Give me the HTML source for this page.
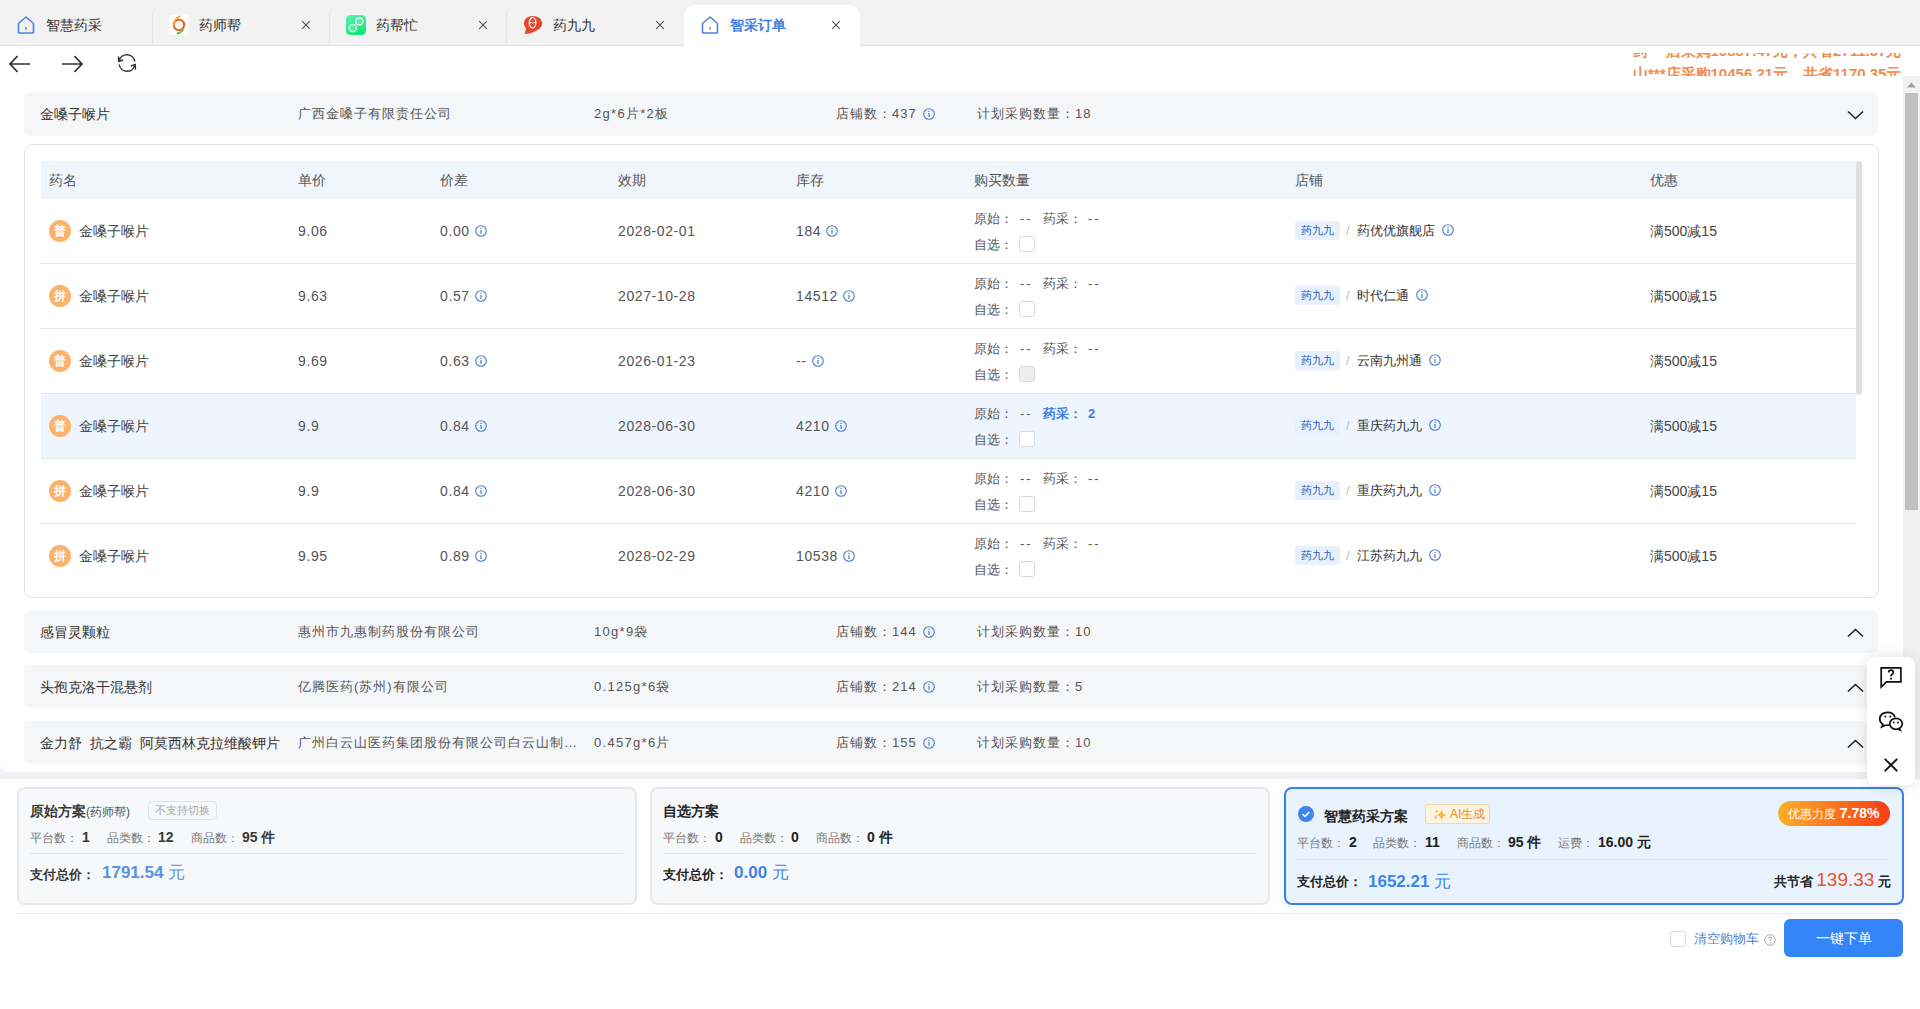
<!DOCTYPE html><html><head><meta charset="utf-8"><style>*{box-sizing:border-box;margin:0;padding:0}
html,body{width:1920px;height:1009px;overflow:hidden;background:#fff;font-family:"Liberation Sans",sans-serif;color:#333;font-size:14px}
.a{position:absolute;white-space:nowrap}
#tabbar{position:absolute;left:0;top:0;width:1920px;height:46px;background:#f2f2f2;border-bottom:1px solid #e3e3e3;z-index:2}
.tab,.tab0{position:absolute;top:5px;height:41px;width:177px}
.tab0{left:0;width:152px}
.tab{border-radius:10px 10px 0 0;border-left:1px solid #e4e4e4}
.tab.active{background:#fff;border:none;width:176px}
.ic{position:absolute;left:16px;top:10px;width:20px;height:20px}
.tab0 .ic{left:16px;top:10px}
.tt{position:absolute;left:46px;top:12px;font-size:14px;color:#333;line-height:16px;white-space:nowrap}
.cl{position:absolute;left:148px;top:15px;width:10px;height:10px;line-height:0}
.tab.active .cl{left:147px}
#nav{position:absolute;left:0;top:46px;width:1920px;height:30px;background:#fff}
#ticker{position:absolute;left:1633px;top:7px;width:270px;height:23px;overflow:hidden}
.tk{position:absolute;left:0;font-size:15px;font-weight:bold;color:#f08c4c;line-height:18px;white-space:nowrap}
#content{position:absolute;left:0;top:76px;width:1903px;height:696px;background:#fff;border-radius:8px;overflow:hidden;z-index:1}
.gh{position:absolute;left:24px;width:1854px;height:44px;background:#f5f6f8;border-radius:6px}
.gh .nm{position:absolute;left:16px;top:13px;font-size:14px;line-height:18px;color:#333;white-space:nowrap}
.gh .co,.gh .sp,.gh .sh,.gh .pl{position:absolute;top:14px;font-size:13px;line-height:16px;color:#555;white-space:nowrap;letter-spacing:1px}
.gh .co{left:274px}
.gh .sp{left:570px;letter-spacing:1.3px}
.gh .sh{left:812px}
.gh .pl{left:953px}
.gh .chev{position:absolute;left:1823px;top:18px;width:17px;height:10px;line-height:0}
.info{display:inline-block;width:12px;height:12px;vertical-align:-1px;margin-left:3px}
.gh .info{margin-left:2px;vertical-align:-2px}
#card{position:absolute;left:24px;top:68px;width:1855px;height:454px;border:1px solid #e4e4e4;border-radius:8px;background:#fff}
#thead{position:absolute;left:16px;top:16px;width:1815px;height:38px;background:#f1f6fd}
.th{position:absolute;top:11px;font-size:14px;line-height:16px;color:#555;white-space:nowrap}
.row{position:absolute;left:16px;width:1815px;height:65px;border-bottom:1px solid #e6e6e6}
.row.hl{background:#eef5fe}
.td{position:absolute;top:23px;font-size:14px;line-height:18px;color:#444;white-space:nowrap}
.num{letter-spacing:0.6px;color:#555}
.num .info{margin-left:5px}
.badge{position:absolute;left:8px;top:21px;width:22px;height:22px;border-radius:50%;background:#fbb36b;color:#fff;font-size:12px;line-height:22px;text-align:center;font-weight:bold}
.q{position:absolute;font-size:13px;line-height:16px;color:#555;white-space:nowrap}
.cb{position:absolute;left:978px;top:37px;width:16px;height:16px;border:1px solid #d9d9d9;border-radius:3px;background:#fff}
.tag{position:absolute;left:1254px;top:22px;width:45px;height:19px;background:#e6f1fd;color:#2e5fb5;font-size:11px;line-height:19px;text-align:center;border-radius:3px}
.slash{position:absolute;left:1305px;top:23px;color:#bbb;font-size:13px;line-height:18px}
.store{position:absolute;left:1316px;top:23px;font-size:13px;line-height:18px;color:#333;white-space:nowrap}
#tscroll{position:absolute;left:1831px;top:16px;width:6px;height:234px;background:#e0e0e0;border-radius:3px}
#sbtrack{position:absolute;left:1903px;top:76px;width:17px;height:704px;background:#f1f1f1;z-index:1}
#sbthumb{position:absolute;left:2px;top:17px;width:13px;height:417px;background:#c1c1c1}
#band{position:absolute;left:0;top:760px;width:1903px;height:19px;background:linear-gradient(#f8f9fb,#f1f2f5 60%,#eceef2)}
#bottom{position:absolute;left:0;top:779px;width:1920px;height:230px;background:#fff;z-index:1}
.plan{position:absolute;top:8px;width:620px;height:118px;border:2px solid #e6e8ec;border-radius:8px;background:#f7f8fa}
.plan.sel{width:620px;border-color:#3b80e6;background:#e8f3fe;box-shadow:0 2px 8px rgba(60,120,220,0.08)}
.pt{position:absolute;top:13px;font-size:14px;line-height:18px;font-weight:bold;color:#222;white-space:nowrap}
.nosw{position:absolute;left:129px;top:12px;height:19px;padding:0 6px;border:1px solid #e3e3e3;border-radius:4px;font-size:11px;line-height:17px;color:#aaa;background:#f7f8fa}
.sl{position:absolute;top:41px;font-size:12px;line-height:16px;color:#777;white-space:nowrap}
.sv{position:absolute;top:39px;font-size:14px;line-height:18px;color:#222;font-weight:bold;white-space:nowrap}
.sel .sl{top:46px}
.sel .sv{top:44px}
.pdiv{position:absolute;left:11px;right:12px;top:64px;height:1px;background:#e4e6ea}
.sel .pdiv{top:70px}
.pay{position:absolute;top:77px;font-size:13px;line-height:18px;font-weight:bold;color:#222;white-space:nowrap}
.amt{position:absolute;top:72px;font-size:17px;line-height:24px;font-weight:bold;color:#3d85e8;white-space:nowrap}
.p1 .amt{color:#5b93e0}
.p1 .pt,.p1 .pay,.p1 .sv{color:#3a3a3a}
.yuan{font-weight:normal;font-size:17px}
.aitag{position:absolute;left:139px;top:15px;width:65px;height:20px;border:1px solid #f3d9a9;background:#fdf3e1;border-radius:3px;color:#e2922c;font-size:12px;line-height:14px}
.disc{position:absolute;left:492px;top:12px;width:112px;height:25px;border-radius:13px;background:linear-gradient(90deg,#fbaf28,#f83d16);color:#fff;font-size:12px;line-height:25px;text-align:center;white-space:nowrap}
.save{position:absolute;right:11px;top:80px;font-size:13px;line-height:22px;font-weight:bold;color:#222;white-space:nowrap}
.savenum{font-size:19px;font-weight:normal;color:#e8542f}
#bline{position:absolute;left:16px;top:134px;width:1887px;height:1px;background:#ececec}
#clr{position:absolute;left:1670px;top:151px;width:120px;height:18px;font-size:13px;color:#4a86d8;line-height:18px}
.ccb{position:absolute;left:0;top:1px;width:16px;height:16px;border:1px solid #d9d9d9;border-radius:3px;background:#fff}
#btn{position:absolute;left:1784px;top:140px;width:119px;height:38px;background:#3385f8;border-radius:6px;color:#fff;font-size:14px;line-height:38px;text-align:center}
#float{position:absolute;left:1867px;top:657px;width:48px;height:128px;background:#fff;border-radius:8px;box-shadow:0 0 14px rgba(0,0,0,0.12);z-index:3}
</style></head><body>
<div id="tabbar">
<div class="tab0"><div class="ic"><svg viewBox="0 0 20 20" width="20" height="20"><path d="M2.5 8.5 L10 2 L17.5 8.5 V17.2 Q17.5 18 16.7 18 H3.3 Q2.5 18 2.5 17.2 Z" fill="none" stroke="#4a82e0" stroke-width="1.6" stroke-linejoin="round"/><rect x="9.3" y="12" width="1.4" height="2.6" fill="#4a82e0"/></svg></div><div class="tt">智慧药采</div></div>
<div class="tab" style="left:152px"><div class="ic"><svg viewBox="0 0 20 20" width="20" height="20"><rect width="20" height="20" rx="3.5" fill="#fff"/><circle cx="10" cy="10" r="3.6" fill="#fdeee4"/><circle cx="10" cy="10" r="5.2" fill="none" stroke="#d9682a" stroke-width="2.1"/><path d="M4.8 9.5 Q5.5 4 10.5 1.6" fill="none" stroke="#f2a63a" stroke-width="2" stroke-linecap="round"/><path d="M8.6 18.5 Q11.8 17.8 13.8 15.5" fill="none" stroke="#6cbb2c" stroke-width="1.9" stroke-linecap="round"/></svg></div><div class="tt">药师帮</div><div class="cl"><svg viewBox="0 0 10 10" width="10" height="10"><path d="M1.2 1.2L8.8 8.8M8.8 1.2L1.2 8.8" stroke="#555" stroke-width="1.15"/></svg></div></div>
<div class="tab" style="left:329px"><div class="ic"><svg viewBox="0 0 20 20" width="20" height="20"><defs><linearGradient id="gg" x1="0" y1="0" x2="0.4" y2="1"><stop offset="0" stop-color="#5cf0b4"/><stop offset="1" stop-color="#14e878"/></linearGradient></defs><rect width="20" height="20" rx="4.5" fill="url(#gg)"/><ellipse cx="6.8" cy="13" rx="3.6" ry="3.5" fill="none" stroke="#e8fff4" stroke-width="1.5"/><ellipse cx="13.3" cy="6.6" rx="3.6" ry="3.5" fill="none" stroke="#e8fff4" stroke-width="1.5"/><path d="M5 12.5 L7 14.5 M6.5 11.3 L8.3 13.1 M11.7 6.8 L13.5 8.6 M13 5.3 L15 7.3" stroke="#b9f7da" stroke-width="0.8"/></svg></div><div class="tt">药帮忙</div><div class="cl"><svg viewBox="0 0 10 10" width="10" height="10"><path d="M1.2 1.2L8.8 8.8M8.8 1.2L1.2 8.8" stroke="#555" stroke-width="1.15"/></svg></div></div>
<div class="tab" style="left:506px"><div class="ic"><svg viewBox="0 0 20 20" width="20" height="20"><ellipse cx="10" cy="8.3" rx="9.2" ry="7.4" fill="#e5472b"/><path d="M3.2 12.5 Q2.6 16.5 1.6 19 Q12 18.8 17.5 11.5 Q11 14.5 3.2 12.5Z" fill="#e5472b"/><ellipse cx="9.6" cy="7.8" rx="3.3" ry="5.1" fill="none" stroke="#fff" stroke-width="1.3"/><path d="M6.8 7.8 H12.4" stroke="#fde0d8" stroke-width="0.9"/></svg></div><div class="tt">药九九</div><div class="cl"><svg viewBox="0 0 10 10" width="10" height="10"><path d="M1.2 1.2L8.8 8.8M8.8 1.2L1.2 8.8" stroke="#555" stroke-width="1.15"/></svg></div></div>
<div class="tab active" style="left:684px"><div class="ic"><svg viewBox="0 0 20 20" width="20" height="20"><path d="M2.5 8.5 L10 2 L17.5 8.5 V17.2 Q17.5 18 16.7 18 H3.3 Q2.5 18 2.5 17.2 Z" fill="none" stroke="#4a82e0" stroke-width="1.6" stroke-linejoin="round"/><rect x="9.3" y="12" width="1.4" height="2.6" fill="#4a82e0"/></svg></div><div class="tt" style="color:#3d7fe0;font-weight:bold">智采订单</div><div class="cl"><svg viewBox="0 0 10 10" width="10" height="10"><path d="M1.2 1.2L8.8 8.8M8.8 1.2L1.2 8.8" stroke="#555" stroke-width="1.15"/></svg></div></div>
</div>
<div id="nav">
<svg class="a" style="left:8px;top:8px" width="24" height="20" viewBox="0 0 24 20"><path d="M2 10H22M9.5 2.2L2 10L9.5 17.8" fill="none" stroke="#333" stroke-width="1.7"/></svg>
<svg class="a" style="left:60px;top:8px" width="24" height="20" viewBox="0 0 24 20"><path d="M2 10H22M14.5 2.2L22 10L14.5 17.8" fill="none" stroke="#333" stroke-width="1.7"/></svg>
<svg class="a" style="left:116px;top:7px" width="22" height="20" viewBox="0 0 22 20"><path d="M3.2 7.5 A8 8 0 0 1 18.8 8.5 M18.8 12.5 A8 8 0 0 1 3.2 11.5" fill="none" stroke="#333" stroke-width="1.5"/><path d="M2.5 3.5 L2.8 8.5 L7 7" fill="none" stroke="#333" stroke-width="1.5"/><path d="M19.5 16.5 L19.2 11.5 L15 13" fill="none" stroke="#333" stroke-width="1.5"/></svg>
<div id="ticker"><div class="tk" style="top:-11px">药***店采购10887.47元，共省2711.37元</div><div class="tk" style="top:12px">山***店采购10456.21元，共省1170.35元</div></div>
</div>
<div id="content">
<div class="gh" style="top:16px"><div class="nm">金嗓子喉片</div><div class="co">广西金嗓子有限责任公司</div><div class="sp">2g*6片*2板</div><div class="sh">店铺数：437 <svg class="info" viewBox="0 0 12 12"><circle cx="6" cy="6" r="5.3" fill="none" stroke="#4a7fd0" stroke-width="1.1"/><rect x="5.4" y="5" width="1.2" height="4" fill="#4a7fd0"/><rect x="5.4" y="2.8" width="1.2" height="1.2" fill="#4a7fd0"/></svg></div><div class="pl">计划采购数量：18</div><div class="chev"><svg viewBox="0 0 17 10" width="17" height="10"><path d="M1 1.5L8.5 8.5L16 1.5" fill="none" stroke="#222" stroke-width="1.6"/></svg></div></div>
<div id="card">
<div id="thead">
<div class="th" style="left:8px">药名</div>
<div class="th" style="left:257px">单价</div>
<div class="th" style="left:399px">价差</div>
<div class="th" style="left:577px">效期</div>
<div class="th" style="left:755px">库存</div>
<div class="th" style="left:933px">购买数量</div>
<div class="th" style="left:1254px">店铺</div>
<div class="th" style="left:1609px">优惠</div>
</div>
<div class="row" style="top:54px">
<div class="badge">普</div><div class="td" style="left:38px">金嗓子喉片</div>
<div class="td num" style="left:257px">9.06</div>
<div class="td num" style="left:399px">0.00<svg class="info" viewBox="0 0 12 12"><circle cx="6" cy="6" r="5.3" fill="none" stroke="#4a7fd0" stroke-width="1.1"/><rect x="5.4" y="5" width="1.2" height="4" fill="#4a7fd0"/><rect x="5.4" y="2.8" width="1.2" height="1.2" fill="#4a7fd0"/></svg></div>
<div class="td num" style="left:577px">2028-02-01</div>
<div class="td num" style="left:755px">184<svg class="info" viewBox="0 0 12 12"><circle cx="6" cy="6" r="5.3" fill="none" stroke="#4a7fd0" stroke-width="1.1"/><rect x="5.4" y="5" width="1.2" height="4" fill="#4a7fd0"/><rect x="5.4" y="2.8" width="1.2" height="1.2" fill="#4a7fd0"/></svg></div>
<div class="q" style="left:933px;top:12px">原始：</div><div class="q" style="left:979px;top:12px;letter-spacing:2px">--</div>
<div class="q" style="left:1002px;top:12px">药采：</div><div class="q" style="left:1047px;top:12px"><span style="letter-spacing:2px">--</span></div>
<div class="q" style="left:933px;top:38px">自选：</div><div class="cb"></div>
<div class="tag">药九九</div><div class="slash">/</div><div class="store">药优优旗舰店 <svg class="info" viewBox="0 0 12 12"><circle cx="6" cy="6" r="5.3" fill="none" stroke="#4a7fd0" stroke-width="1.1"/><rect x="5.4" y="5" width="1.2" height="4" fill="#4a7fd0"/><rect x="5.4" y="2.8" width="1.2" height="1.2" fill="#4a7fd0"/></svg></div>
<div class="td" style="left:1609px">满500减15</div>
</div>
<div class="row" style="top:119px">
<div class="badge">拼</div><div class="td" style="left:38px">金嗓子喉片</div>
<div class="td num" style="left:257px">9.63</div>
<div class="td num" style="left:399px">0.57<svg class="info" viewBox="0 0 12 12"><circle cx="6" cy="6" r="5.3" fill="none" stroke="#4a7fd0" stroke-width="1.1"/><rect x="5.4" y="5" width="1.2" height="4" fill="#4a7fd0"/><rect x="5.4" y="2.8" width="1.2" height="1.2" fill="#4a7fd0"/></svg></div>
<div class="td num" style="left:577px">2027-10-28</div>
<div class="td num" style="left:755px">14512<svg class="info" viewBox="0 0 12 12"><circle cx="6" cy="6" r="5.3" fill="none" stroke="#4a7fd0" stroke-width="1.1"/><rect x="5.4" y="5" width="1.2" height="4" fill="#4a7fd0"/><rect x="5.4" y="2.8" width="1.2" height="1.2" fill="#4a7fd0"/></svg></div>
<div class="q" style="left:933px;top:12px">原始：</div><div class="q" style="left:979px;top:12px;letter-spacing:2px">--</div>
<div class="q" style="left:1002px;top:12px">药采：</div><div class="q" style="left:1047px;top:12px"><span style="letter-spacing:2px">--</span></div>
<div class="q" style="left:933px;top:38px">自选：</div><div class="cb"></div>
<div class="tag">药九九</div><div class="slash">/</div><div class="store">时代仁通 <svg class="info" viewBox="0 0 12 12"><circle cx="6" cy="6" r="5.3" fill="none" stroke="#4a7fd0" stroke-width="1.1"/><rect x="5.4" y="5" width="1.2" height="4" fill="#4a7fd0"/><rect x="5.4" y="2.8" width="1.2" height="1.2" fill="#4a7fd0"/></svg></div>
<div class="td" style="left:1609px">满500减15</div>
</div>
<div class="row" style="top:184px">
<div class="badge">普</div><div class="td" style="left:38px">金嗓子喉片</div>
<div class="td num" style="left:257px">9.69</div>
<div class="td num" style="left:399px">0.63<svg class="info" viewBox="0 0 12 12"><circle cx="6" cy="6" r="5.3" fill="none" stroke="#4a7fd0" stroke-width="1.1"/><rect x="5.4" y="5" width="1.2" height="4" fill="#4a7fd0"/><rect x="5.4" y="2.8" width="1.2" height="1.2" fill="#4a7fd0"/></svg></div>
<div class="td num" style="left:577px">2026-01-23</div>
<div class="td num" style="left:755px">--<svg class="info" viewBox="0 0 12 12"><circle cx="6" cy="6" r="5.3" fill="none" stroke="#4a7fd0" stroke-width="1.1"/><rect x="5.4" y="5" width="1.2" height="4" fill="#4a7fd0"/><rect x="5.4" y="2.8" width="1.2" height="1.2" fill="#4a7fd0"/></svg></div>
<div class="q" style="left:933px;top:12px">原始：</div><div class="q" style="left:979px;top:12px;letter-spacing:2px">--</div>
<div class="q" style="left:1002px;top:12px">药采：</div><div class="q" style="left:1047px;top:12px"><span style="letter-spacing:2px">--</span></div>
<div class="q" style="left:933px;top:38px">自选：</div><div class="cb" style="background:#eee"></div>
<div class="tag">药九九</div><div class="slash">/</div><div class="store">云南九州通 <svg class="info" viewBox="0 0 12 12"><circle cx="6" cy="6" r="5.3" fill="none" stroke="#4a7fd0" stroke-width="1.1"/><rect x="5.4" y="5" width="1.2" height="4" fill="#4a7fd0"/><rect x="5.4" y="2.8" width="1.2" height="1.2" fill="#4a7fd0"/></svg></div>
<div class="td" style="left:1609px">满500减15</div>
</div>
<div class="row hl" style="top:249px">
<div class="badge">普</div><div class="td" style="left:38px">金嗓子喉片</div>
<div class="td num" style="left:257px">9.9</div>
<div class="td num" style="left:399px">0.84<svg class="info" viewBox="0 0 12 12"><circle cx="6" cy="6" r="5.3" fill="none" stroke="#4a7fd0" stroke-width="1.1"/><rect x="5.4" y="5" width="1.2" height="4" fill="#4a7fd0"/><rect x="5.4" y="2.8" width="1.2" height="1.2" fill="#4a7fd0"/></svg></div>
<div class="td num" style="left:577px">2028-06-30</div>
<div class="td num" style="left:755px">4210<svg class="info" viewBox="0 0 12 12"><circle cx="6" cy="6" r="5.3" fill="none" stroke="#4a7fd0" stroke-width="1.1"/><rect x="5.4" y="5" width="1.2" height="4" fill="#4a7fd0"/><rect x="5.4" y="2.8" width="1.2" height="1.2" fill="#4a7fd0"/></svg></div>
<div class="q" style="left:933px;top:12px">原始：</div><div class="q" style="left:979px;top:12px;letter-spacing:2px">--</div>
<div class="q" style="left:1002px;top:12px"><span style="color:#3d7fe0;font-weight:bold">药采：</span></div><div class="q" style="left:1047px;top:12px"><span style="color:#3d7fe0;font-weight:bold">2</span></div>
<div class="q" style="left:933px;top:38px">自选：</div><div class="cb"></div>
<div class="tag">药九九</div><div class="slash">/</div><div class="store">重庆药九九 <svg class="info" viewBox="0 0 12 12"><circle cx="6" cy="6" r="5.3" fill="none" stroke="#4a7fd0" stroke-width="1.1"/><rect x="5.4" y="5" width="1.2" height="4" fill="#4a7fd0"/><rect x="5.4" y="2.8" width="1.2" height="1.2" fill="#4a7fd0"/></svg></div>
<div class="td" style="left:1609px">满500减15</div>
</div>
<div class="row" style="top:314px">
<div class="badge">拼</div><div class="td" style="left:38px">金嗓子喉片</div>
<div class="td num" style="left:257px">9.9</div>
<div class="td num" style="left:399px">0.84<svg class="info" viewBox="0 0 12 12"><circle cx="6" cy="6" r="5.3" fill="none" stroke="#4a7fd0" stroke-width="1.1"/><rect x="5.4" y="5" width="1.2" height="4" fill="#4a7fd0"/><rect x="5.4" y="2.8" width="1.2" height="1.2" fill="#4a7fd0"/></svg></div>
<div class="td num" style="left:577px">2028-06-30</div>
<div class="td num" style="left:755px">4210<svg class="info" viewBox="0 0 12 12"><circle cx="6" cy="6" r="5.3" fill="none" stroke="#4a7fd0" stroke-width="1.1"/><rect x="5.4" y="5" width="1.2" height="4" fill="#4a7fd0"/><rect x="5.4" y="2.8" width="1.2" height="1.2" fill="#4a7fd0"/></svg></div>
<div class="q" style="left:933px;top:12px">原始：</div><div class="q" style="left:979px;top:12px;letter-spacing:2px">--</div>
<div class="q" style="left:1002px;top:12px">药采：</div><div class="q" style="left:1047px;top:12px"><span style="letter-spacing:2px">--</span></div>
<div class="q" style="left:933px;top:38px">自选：</div><div class="cb"></div>
<div class="tag">药九九</div><div class="slash">/</div><div class="store">重庆药九九 <svg class="info" viewBox="0 0 12 12"><circle cx="6" cy="6" r="5.3" fill="none" stroke="#4a7fd0" stroke-width="1.1"/><rect x="5.4" y="5" width="1.2" height="4" fill="#4a7fd0"/><rect x="5.4" y="2.8" width="1.2" height="1.2" fill="#4a7fd0"/></svg></div>
<div class="td" style="left:1609px">满500减15</div>
</div>
<div class="row" style="top:379px;border-bottom:none">
<div class="badge">拼</div><div class="td" style="left:38px">金嗓子喉片</div>
<div class="td num" style="left:257px">9.95</div>
<div class="td num" style="left:399px">0.89<svg class="info" viewBox="0 0 12 12"><circle cx="6" cy="6" r="5.3" fill="none" stroke="#4a7fd0" stroke-width="1.1"/><rect x="5.4" y="5" width="1.2" height="4" fill="#4a7fd0"/><rect x="5.4" y="2.8" width="1.2" height="1.2" fill="#4a7fd0"/></svg></div>
<div class="td num" style="left:577px">2028-02-29</div>
<div class="td num" style="left:755px">10538<svg class="info" viewBox="0 0 12 12"><circle cx="6" cy="6" r="5.3" fill="none" stroke="#4a7fd0" stroke-width="1.1"/><rect x="5.4" y="5" width="1.2" height="4" fill="#4a7fd0"/><rect x="5.4" y="2.8" width="1.2" height="1.2" fill="#4a7fd0"/></svg></div>
<div class="q" style="left:933px;top:12px">原始：</div><div class="q" style="left:979px;top:12px;letter-spacing:2px">--</div>
<div class="q" style="left:1002px;top:12px">药采：</div><div class="q" style="left:1047px;top:12px"><span style="letter-spacing:2px">--</span></div>
<div class="q" style="left:933px;top:38px">自选：</div><div class="cb"></div>
<div class="tag">药九九</div><div class="slash">/</div><div class="store">江苏药九九 <svg class="info" viewBox="0 0 12 12"><circle cx="6" cy="6" r="5.3" fill="none" stroke="#4a7fd0" stroke-width="1.1"/><rect x="5.4" y="5" width="1.2" height="4" fill="#4a7fd0"/><rect x="5.4" y="2.8" width="1.2" height="1.2" fill="#4a7fd0"/></svg></div>
<div class="td" style="left:1609px">满500减15</div>
</div>
<div id="tscroll"></div>
</div>
<div class="gh" style="height:43px;top:534px"><div class="nm">感冒灵颗粒</div><div class="co">惠州市九惠制药股份有限公司</div><div class="sp">10g*9袋</div><div class="sh">店铺数：144 <svg class="info" viewBox="0 0 12 12"><circle cx="6" cy="6" r="5.3" fill="none" stroke="#4a7fd0" stroke-width="1.1"/><rect x="5.4" y="5" width="1.2" height="4" fill="#4a7fd0"/><rect x="5.4" y="2.8" width="1.2" height="1.2" fill="#4a7fd0"/></svg></div><div class="pl">计划采购数量：10</div><div class="chev"><svg viewBox="0 0 17 10" width="17" height="10"><path d="M1 8.5L8.5 1.5L16 8.5" fill="none" stroke="#222" stroke-width="1.6"/></svg></div></div>
<div class="gh" style="height:43px;top:589px"><div class="nm">头孢克洛干混悬剂</div><div class="co">亿腾医药(苏州)有限公司</div><div class="sp">0.125g*6袋</div><div class="sh">店铺数：214 <svg class="info" viewBox="0 0 12 12"><circle cx="6" cy="6" r="5.3" fill="none" stroke="#4a7fd0" stroke-width="1.1"/><rect x="5.4" y="5" width="1.2" height="4" fill="#4a7fd0"/><rect x="5.4" y="2.8" width="1.2" height="1.2" fill="#4a7fd0"/></svg></div><div class="pl">计划采购数量：5</div><div class="chev"><svg viewBox="0 0 17 10" width="17" height="10"><path d="M1 8.5L8.5 1.5L16 8.5" fill="none" stroke="#222" stroke-width="1.6"/></svg></div></div>
<div class="gh" style="height:43px;top:645px"><div class="nm">金力舒&nbsp;&nbsp;抗之霸&nbsp;&nbsp;阿莫西林克拉维酸钾片</div><div class="co">广州白云山医药集团股份有限公司白云山制…</div><div class="sp">0.457g*6片</div><div class="sh">店铺数：155 <svg class="info" viewBox="0 0 12 12"><circle cx="6" cy="6" r="5.3" fill="none" stroke="#4a7fd0" stroke-width="1.1"/><rect x="5.4" y="5" width="1.2" height="4" fill="#4a7fd0"/><rect x="5.4" y="2.8" width="1.2" height="1.2" fill="#4a7fd0"/></svg></div><div class="pl">计划采购数量：10</div><div class="chev"><svg viewBox="0 0 17 10" width="17" height="10"><path d="M1 8.5L8.5 1.5L16 8.5" fill="none" stroke="#222" stroke-width="1.6"/></svg></div></div>
</div>
<div id="sbtrack"><svg class="a" style="left:4px;top:6px" width="9" height="6" viewBox="0 0 9 6"><path d="M0 5.5L4.5 0.5L9 5.5Z" fill="#a3a3a3"/></svg><div id="sbthumb"></div></div>
<div id="band"></div>
<div id="bottom">
<div class="plan p1" style="left:17px">
<div class="pt" style="left:11px">原始方案<span style="font-weight:normal;font-size:12px;color:#555">(药师帮)</span></div><div class="nosw">不支持切换</div>
<div class="sl" style="left:11px">平台数：</div><div class="sv" style="left:63px">1</div><div class="sl" style="left:88px">品类数：</div><div class="sv" style="left:139px">12</div><div class="sl" style="left:172px">商品数：</div><div class="sv" style="left:223px">95 件</div>
<div class="pdiv"></div><div class="pay" style="left:11px">支付总价：</div><div class="amt" style="left:83px">1791.54 <span class="yuan">元</span></div>
</div>
<div class="plan" style="left:650px">
<div class="pt" style="left:11px">自选方案</div>
<div class="sl" style="left:11px">平台数：</div><div class="sv" style="left:63px">0</div><div class="sl" style="left:88px">品类数：</div><div class="sv" style="left:139px">0</div><div class="sl" style="left:164px">商品数：</div><div class="sv" style="left:215px">0 件</div>
<div class="pdiv"></div><div class="pay" style="left:11px">支付总价：</div><div class="amt" style="left:82px">0.00 <span class="yuan">元</span></div>
</div>
<div class="plan sel" style="left:1284px">
<svg class="a" style="left:12px;top:17px" width="16" height="16" viewBox="0 0 16 16"><circle cx="8" cy="8" r="8" fill="#3d85ee"/><path d="M4.5 8.2L7 10.5L11.5 5.8" fill="none" stroke="#fff" stroke-width="1.6"/></svg>
<div class="pt" style="left:38px;top:18px;font-size:14px">智慧药采方案</div>
<div class="aitag"><svg class="a" style="left:2px;top:-3px" width="24" height="20" viewBox="0 0 24 20"><path d="M13.5 7 Q14 12.5 19 13 Q14 13.5 13.5 19 Q13 13.5 8 13 Q13 12.5 13.5 7Z" fill="#f2bd3c"/><path d="M8.7 7.4 Q8.9 9 10.5 9.2 Q8.9 9.4 8.7 11 Q8.5 9.4 6.9 9.2 Q8.5 9 8.7 7.4Z" fill="#f2c052"/><path d="M7.8 13.2 Q8 15.3 10.1 15.5 Q8 15.7 7.8 17.8 Q7.6 15.7 5.5 15.5 Q7.6 15.3 7.8 13.2Z" fill="#f2c052"/></svg><span class="a" style="left:24px;top:2px">AI生成</span></div>
<div class="disc">优惠力度 <b style="font-size:14px">7.78%</b></div>
<div class="sl" style="left:11px">平台数：</div><div class="sv" style="left:63px">2</div><div class="sl" style="left:87px">品类数：</div><div class="sv" style="left:139px">11</div><div class="sl" style="left:171px">商品数：</div><div class="sv" style="left:222px">95 件</div><div class="sl" style="left:272px">运费：</div><div class="sv" style="left:312px">16.00 元</div>
<div class="pdiv"></div><div class="pay" style="left:11px;top:84px">支付总价：</div><div class="amt" style="left:82px;top:81px">1652.21 <span class="yuan">元</span></div>
<div class="save">共节省 <span class="savenum">139.33</span> 元</div>
</div>
<div id="bline"></div>
<div id="clr"><div class="ccb"></div><span class="a" style="left:24px;top:0">清空购物车</span><svg class="a" style="left:94px;top:4px" width="12" height="12" viewBox="0 0 12 12"><circle cx="6" cy="6" r="5.3" fill="none" stroke="#aaa" stroke-width="1"/><path d="M4.3 4.6 Q4.3 3 6 3 Q7.7 3 7.7 4.5 Q7.7 5.5 6.3 6.1 V7.2" fill="none" stroke="#aaa" stroke-width="1"/><circle cx="6.2" cy="8.9" r="0.6" fill="#aaa"/></svg></div>
<div id="btn">一键下单</div>
</div>
<div id="float"><svg class="a" style="left:0;top:0" width="48" height="128" viewBox="0 0 48 128"><path d="M14.2 10.9 H33.9 V24.9 H19.5 L14.2 30 Z" fill="none" stroke="#111" stroke-width="1.7" stroke-linejoin="miter"/><path d="M21.6 15.6 Q21.6 13.1 24 13.1 Q26.4 13.1 26.4 15.3 Q26.4 16.7 24.9 17.5 Q24 18 24 19.2 V19.6" fill="none" stroke="#111" stroke-width="1.6"/><circle cx="24" cy="21.7" r="1.05" fill="#111"/><path d="M16.2 67.6 C13.9 66.3 12.8 64.3 12.8 61.8 C12.8 57.8 16.3 55.3 20.5 55.3 C24.2 55.3 27.2 57.2 28 60.4" fill="none" stroke="#111" stroke-width="1.8"/><path d="M16.2 67.2 L14.8 69.8 L18.6 68.2 C19.6 68.4 20.8 68.3 22 68.1" fill="none" stroke="#111" stroke-width="1.6"/><ellipse cx="29" cy="66.8" rx="6.3" ry="5.5" fill="#fff" stroke="#111" stroke-width="1.8"/><path d="M32.5 71.5 L33.8 73.6 L30.5 72.3" fill="#111" stroke="#111" stroke-width="1.2"/><circle cx="18.4" cy="59.6" r="1" fill="#111"/><circle cx="23.3" cy="59.6" r="1" fill="#111"/><circle cx="26.7" cy="65.5" r="0.95" fill="#111"/><circle cx="31" cy="65.5" r="0.95" fill="#111"/><path d="M18.3 102.3 L29.7 113.7 M29.7 102.3 L18.3 113.7" stroke="#111" stroke-width="1.9" stroke-linecap="round"/></svg></div>
</body></html>
